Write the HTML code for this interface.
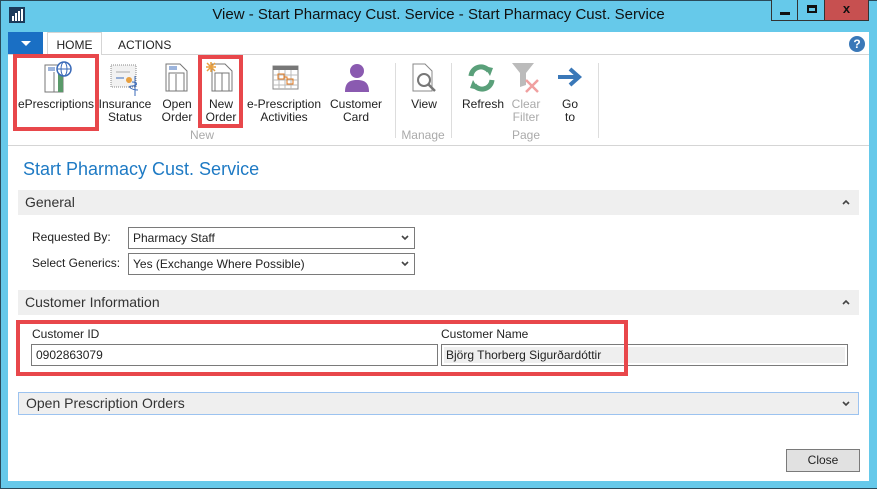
<!DOCTYPE html>
<html><head><meta charset="utf-8"><style>
*{box-sizing:border-box;margin:0;padding:0}
body{width:877px;height:489px;overflow:hidden;background:#66c9ea;font-family:"Liberation Sans",sans-serif;position:relative;color:#222}
.a{position:absolute}
.frame{left:0;top:0;width:877px;height:489px;border:1px solid #2a4a5a;border-right:none}
.content{left:8px;top:32px;width:861px;height:449px;background:#fff}
.title{left:0;width:877px;top:6px;text-align:center;font-size:15px;color:#111}
.wb{top:0;height:21px;border:1px solid #333;border-top:none;background:#66c9ea}
.lbl{font-size:12px;text-align:center;line-height:13px;color:#222}
.bar{background:#efefef;font-size:14px;color:#333;padding-left:7px;line-height:25px}
.sel{border:1px solid #7a7a7a;height:22px;font-size:12px;line-height:20px;padding-left:4px;background:#fff}
.car{position:absolute;right:5px;top:7px}
.red{border:4px solid #e8474b}
</style></head><body>
<div class="a frame"></div>
<svg class="a" style="left:9px;top:7px" width="16" height="16"><rect width="16" height="16" fill="#1b3a5a"/><rect x="3" y="9" width="2" height="5" fill="#fff"/><rect x="6" y="6" width="2" height="8" fill="#fff"/><rect x="9" y="4" width="2" height="10" fill="#fff"/><rect x="12" y="2" width="2" height="12" fill="#fff"/></svg>
<div class="a title">View - Start Pharmacy Cust. Service - Start Pharmacy Cust. Service</div>
<div class="a wb" style="left:771px;width:27px"><div class="a" style="left:8px;top:12px;width:10px;height:3px;background:#111"></div></div>
<div class="a wb" style="left:797px;width:28px"><div class="a" style="left:9px;top:5px;width:10px;height:8px;border:2px solid #111;border-top-width:3px"></div></div>
<div class="a wb" style="left:824px;width:45px;background:#c75050;color:#111;font-size:13px;font-weight:bold;text-align:center;line-height:18px">x</div>
<div class="a content"></div>
<div class="a" style="left:8px;top:32px;width:35px;height:22px;background:#1a6fc4"><div class="a" style="left:13px;top:9px;border:5px solid transparent;border-top:5px solid #fff;border-bottom:none"></div></div>
<div class="a" style="left:8px;top:54px;width:861px;height:1px;background:#d5d5d5"></div>
<div class="a" style="left:47px;top:32px;width:55px;height:23px;border:1px solid #d5d5d5;border-bottom:none;background:#fff;font-size:12px;text-align:center;line-height:25px">HOME</div>
<div class="a" style="left:118px;top:38px;font-size:12px">ACTIONS</div>
<div class="a" style="left:849px;top:36px;width:16px;height:16px;border-radius:50%;background:#3a78b8;color:#fff;font-size:12px;font-weight:bold;text-align:center;line-height:16px">?</div>
<div class="a" style="left:8px;top:145px;width:861px;height:1px;background:#d5d5d5"></div>
<svg class="a" style="left:40px;top:60px" width="34" height="34"><rect x="5" y="5" width="18" height="27" fill="#fff" stroke="#777"/><line x1="14" y1="12" x2="14" y2="32" stroke="#777"/><rect x="18" y="12" width="5" height="20" fill="#5a9a6a"/><line x1="8" y1="8" x2="15" y2="8" stroke="#3a6ab8"/><line x1="8" y1="10" x2="15" y2="10" stroke="#3a6ab8"/><circle cx="24" cy="9" r="7" fill="#fff" stroke="#3a6ab8" stroke-width="1.5"/><ellipse cx="24" cy="9" rx="3" ry="7" fill="none" stroke="#3a6ab8"/><line x1="17" y1="9" x2="31" y2="9" stroke="#3a6ab8"/></svg>
<svg class="a" style="left:108px;top:62px" width="36" height="36"><rect x="3" y="3" width="25" height="22" fill="#f2f2f2" stroke="#888" stroke-dasharray="1 1"/><line x1="8" y1="10" x2="22" y2="10" stroke="#aaa"/><line x1="8" y1="16" x2="16" y2="16" stroke="#3a6ab8"/><circle cx="21" cy="18" r="3" fill="#e8a040"/><path d="M27 14v20M24 20c6 0 6 4 0 4s0 4 6 4" stroke="#3a6ab8" fill="none"/></svg>
<svg class="a" style="left:164px;top:63px" width="26" height="30"><path d="M2 1h14l7 7v20H2z" fill="#fff" stroke="#777"/><line x1="12" y1="11" x2="12" y2="28" stroke="#777"/><rect x="5" y="10" width="15" height="18" fill="none" stroke="#777"/><line x1="5" y1="4" x2="13" y2="4" stroke="#3a6ab8"/><line x1="5" y1="6" x2="13" y2="6" stroke="#3a6ab8"/></svg>
<svg class="a" style="left:205px;top:61px" width="30" height="32"><path d="M7 3h13l7 7v20H7z" fill="#fff" stroke="#777"/><rect x="10" y="12" width="14" height="18" fill="none" stroke="#777"/><line x1="17" y1="12" x2="17" y2="30" stroke="#777"/><g stroke="#e8a040" stroke-width="1.5"><line x1="6" y1="1" x2="6" y2="11"/><line x1="1" y1="6" x2="11" y2="6"/><line x1="2" y1="2" x2="10" y2="10"/><line x1="10" y1="2" x2="2" y2="10"/></g></svg>
<svg class="a" style="left:272px;top:65px" width="28" height="26"><rect x="1" y="1" width="25" height="23" fill="#fff" stroke="#888"/><rect x="1" y="1" width="25" height="4" fill="#777"/><path d="M1 10h25M1 15h25M1 20h25M7 5v19M13 5v19M19 5v19" stroke="#bbb"/><rect x="6" y="9" width="6" height="5" fill="none" stroke="#e07a20"/><rect x="15" y="14" width="6" height="5" fill="none" stroke="#e07a20"/><path d="M12 12h3v2" stroke="#e07a20" fill="none"/></svg>
<svg class="a" style="left:343px;top:63px" width="28" height="30"><circle cx="14" cy="8" r="7" fill="#8a5ab0"/><path d="M2 29c0-9 4-12 12-12s12 3 12 12z" fill="#8a5ab0"/></svg>
<svg class="a" style="left:411px;top:63px" width="30" height="32"><path d="M2 1h12l7 7v20H2z" fill="#fff" stroke="#888"/><circle cx="13" cy="17" r="6" fill="none" stroke="#777" stroke-width="2"/><line x1="17" y1="21" x2="24" y2="28" stroke="#777" stroke-width="2.5"/></svg>
<div class="a" style="left:395px;top:63px;width:1px;height:75px;background:#ddd"></div>
<div class="a" style="left:451px;top:63px;width:1px;height:75px;background:#ddd"></div>
<div class="a" style="left:598px;top:63px;width:1px;height:75px;background:#ddd"></div>
<svg class="a" style="left:467px;top:64px" width="30" height="28"><path d="M4 12a10 10 0 0 1 18-5" stroke="#5aa07a" stroke-width="5" fill="none"/><path d="M17 2l9 2-3 8z" fill="#5aa07a"/><path d="M25 16a10 10 0 0 1-18 5" stroke="#5aa07a" stroke-width="5" fill="none"/><path d="M12 26l-9-2 3-8z" fill="#5aa07a"/></svg>
<svg class="a" style="left:510px;top:62px" width="34" height="32"><path d="M2 1h22l-8 10v12l-6 2V11z" fill="#bbb"/><path d="M16 18l12 12M28 18L16 30" stroke="#f0a0a0" stroke-width="2.5"/></svg>
<svg class="a" style="left:556px;top:67px" width="28" height="20"><path d="M2 10h18" stroke="#3a78b8" stroke-width="4"/><path d="M14 2l9 8-9 8" stroke="#3a78b8" stroke-width="4" fill="none"/></svg>
<div class="a lbl" style="left:16px;top:98px;width:80px">ePrescriptions</div>
<div class="a lbl" style="left:98px;top:98px;width:54px">Insurance<br>Status</div>
<div class="a lbl" style="left:157px;top:98px;width:40px">Open<br>Order</div>
<div class="a lbl" style="left:201px;top:98px;width:40px">New<br>Order</div>
<div class="a lbl" style="left:244px;top:98px;width:80px">e-Prescription<br>Activities</div>
<div class="a lbl" style="left:326px;top:98px;width:60px">Customer<br>Card</div>
<div class="a lbl" style="left:404px;top:98px;width:40px">View</div>
<div class="a lbl" style="left:458px;top:98px;width:50px">Refresh</div>
<div class="a lbl" style="left:506px;top:98px;width:40px;color:#aaa">Clear<br>Filter</div>
<div class="a lbl" style="left:550px;top:98px;width:40px">Go<br>to</div>
<div class="a lbl" style="left:182px;top:129px;width:40px;color:#aaa">New</div>
<div class="a lbl" style="left:398px;top:129px;width:50px;color:#aaa">Manage</div>
<div class="a lbl" style="left:506px;top:129px;width:40px;color:#aaa">Page</div>
<div class="a red" style="left:13px;top:54px;width:86px;height:77px"></div>
<div class="a red" style="left:198px;top:55px;width:45px;height:73px"></div>
<div class="a" style="left:23px;top:159px;font-size:18px;color:#1e7ac4">Start Pharmacy Cust. Service</div>
<div class="a bar" style="left:18px;top:190px;width:841px">General<svg class="car" style="right:9px;top:9px" width="8" height="6"><path d="M1 5l3-3 3 3" stroke="#444" stroke-width="1.6" fill="none"/></svg></div>
<div class="a" style="left:32px;top:230px;font-size:12px">Requested By:</div>
<div class="a sel" style="left:128px;top:227px;width:287px">Pharmacy Staff<svg class="car" width="8" height="6"><path d="M1 1l3 3 3-3" stroke="#444" stroke-width="1.6" fill="none"/></svg></div>
<div class="a" style="left:32px;top:256px;font-size:12px">Select Generics:</div>
<div class="a sel" style="left:128px;top:253px;width:287px">Yes (Exchange Where Possible)<svg class="car" width="8" height="6"><path d="M1 1l3 3 3-3" stroke="#444" stroke-width="1.6" fill="none"/></svg></div>
<div class="a bar" style="left:18px;top:290px;width:841px">Customer Information<svg class="car" style="right:9px;top:9px" width="8" height="6"><path d="M1 5l3-3 3 3" stroke="#444" stroke-width="1.6" fill="none"/></svg></div>
<div class="a" style="left:32px;top:327px;font-size:12px">Customer ID</div>
<div class="a sel" style="left:31px;top:344px;width:407px">0902863079</div>
<div class="a" style="left:441px;top:327px;font-size:12px">Customer Name</div>
<div class="a sel" style="left:441px;top:344px;width:407px;padding:2px;"><div style="background:#efefef;height:16px;line-height:16px;padding-left:2px">Björg Thorberg Sigurðardóttir</div></div>
<div class="a red" style="left:16px;top:320px;width:612px;height:56px"></div>
<div class="a bar" style="left:18px;top:392px;width:841px;height:23px;line-height:21px;border:1px solid #9cc3f0">Open Prescription Orders<svg class="car" style="right:8px;top:8px" width="8" height="6"><path d="M1 1l3 3 3-3" stroke="#444" stroke-width="1.6" fill="none"/></svg></div>
<div class="a" style="left:786px;top:449px;width:74px;height:23px;border:1px solid #7a7a7a;background:#e1e1e1;font-size:12px;text-align:center;line-height:21px">Close</div>
</body></html>
